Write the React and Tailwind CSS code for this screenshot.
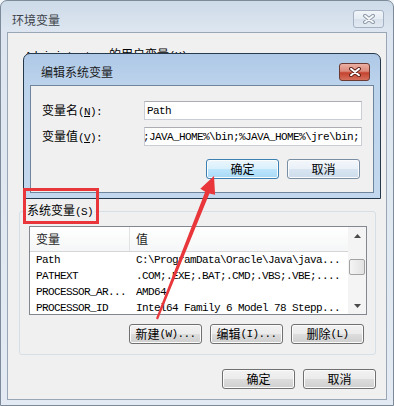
import React from "react";

function Zh({ children, className = "" }) {
  return (
    <span className={`font-['Noto_Sans_CJK_SC',sans-serif] text-[12px] tracking-normal leading-[16px] ${className}`}>
      {children}
    </span>
  );
}

function CloseBtn({ active }) {
  return (
    <div
      className={`w-[31px] h-[18px] rounded-[3px] border flex items-center justify-center ${
        active
          ? "border-[#6b3a33] bg-[linear-gradient(#eab0a3_0%,#dc8a7c_45%,#c4432f_55%,#d5705d_100%)]"
          : "border-[#a3b1c3] bg-[linear-gradient(#f1f5f9_0%,#e5ecf3_50%,#d8e1ec_50%,#e2e9f2_100%)]"
      }`}
    >
      <svg width="12" height="10" viewBox="0 0 12 10">
        <path
          d="M2 1.8 L10 8.2 M10 1.8 L2 8.2"
          stroke={active ? "#5a1d15" : "#8a96a3"}
          strokeWidth="3.8"
          strokeLinecap="round"
        />
        <path
          d="M2 1.8 L10 8.2 M10 1.8 L2 8.2"
          stroke={active ? "#ffffff" : "#f6f8fb"}
          strokeWidth="2"
          strokeLinecap="round"
        />
      </svg>
    </div>
  );
}

// kind: primary (focused, blue), soft (active dialog, bluish), plain
function Btn({ children, kind = "plain" }) {
  const look =
    kind === "primary"
      ? "border-[#3c7fb1] bg-[linear-gradient(#eaf6fd_0%,#d9f0fc_50%,#bee6fd_50%,#a7d9f5_100%)]"
      : kind === "soft"
      ? "border-[#7a8ea3] bg-[linear-gradient(#f3f7fb_0%,#e9f0f7_50%,#d9e5f1_50%,#cddcec_100%)]"
      : "border-[#707070] bg-[linear-gradient(#f2f2f2_0%,#ebebeb_50%,#dddddd_50%,#cfcfcf_100%)]";
  return (
    <div
      className={`h-[20px] w-[73px] rounded-[3px] border flex items-center justify-center shadow-[inset_0_0_0_1px_#fbfbfb] ${look}`}
    >
      {children}
    </div>
  );
}

function Arrow({ down }) {
  return (
    <svg width="7" height="4" viewBox="0 0 7 4">
      <path d={down ? "M0 0 H7 L3.5 4 Z" : "M0 4 H7 L3.5 0 Z"} fill="#4a4a4a" />
    </svg>
  );
}

const rows = [
  ["Path", "C:\\ProgramData\\Oracle\\Java\\java..."],
  ["PATHEXT", ".COM;.EXE;.BAT;.CMD;.VBS;.VBE;...."],
  ["PROCESSOR_AR...", "AMD64"],
  ["PROCESSOR_ID", "Intel64 Family 6 Model 78 Stepp..."],
];

export default function App() {
  return (
    <div className="relative w-[394px] h-[406px] overflow-hidden bg-[#f3f6f9] font-['Liberation_Mono','Noto_Sans_CJK_SC',monospace] text-[11px] tracking-[-0.6px] leading-[16px] text-black">
      {/* outer window: 环境变量 (inactive) */}
      <div className="w-[394px] h-[406px] rounded-t-[7px] border border-[#7c8a9a] px-[6px] pb-[5px] flex flex-col bg-[linear-gradient(180deg,#cddae8_0px,#dde6f0_30px,#e3eaf3_100%)]">
        <div className="h-[31px] flex items-start justify-between shrink-0">
          <Zh className="mt-[11px] ml-[5px] text-[#3d434a]">环境变量</Zh>
          <div className="mt-[9px] mr-[3px]">
            <CloseBtn />
          </div>
        </div>

        <div className="flex-1 border border-[#98a6b6] bg-[#f0f0f0] flex flex-col">
          <div className="mt-[13px] ml-[17px] h-[16px] whitespace-nowrap">
            Administrator <Zh>的用户变量</Zh>(U)
          </div>

          <fieldset className="mt-[140px] ml-[11px] w-[357px] border border-[#d5dfe5] rounded-[3px] pb-[10px]">
            <legend className="ml-[5px] px-[2px] leading-[16px] whitespace-nowrap">
              <Zh>系统变量</Zh>(S)
            </legend>

            <div className="mt-[6px] ml-[9px] w-[338px] h-[89px] border border-[#828790] bg-white flex overflow-hidden">
              <div className="flex-1 min-w-0 flex flex-col">
                <div className="h-[25px] shrink-0 flex border-b border-[#d5d5d5] bg-[linear-gradient(#ffffff,#f5f6f7)]">
                  <div className="w-[100px] border-r border-[#e3e3e3] pl-[6px] flex items-center">
                    <Zh className="text-[#1e1e1e]">变量</Zh>
                  </div>
                  <div className="flex-1 pl-[6px] flex items-center">
                    <Zh className="text-[#1e1e1e]">值</Zh>
                  </div>
                </div>
                {rows.map(([name, value]) => (
                  <div key={name} className="h-[16px] shrink-0 flex whitespace-nowrap">
                    <div className="w-[100px] pl-[6px] overflow-hidden">{name}</div>
                    <div className="flex-1 pl-[6px] overflow-hidden">{value}</div>
                  </div>
                ))}
              </div>
              <div className="w-[18px] shrink-0 bg-[#f4f4f4] flex flex-col items-center">
                <div className="h-[17px] w-full flex items-center justify-center shrink-0">
                  <Arrow />
                </div>
                <div className="mt-[15px] h-[16px] w-[16px] shrink-0 rounded-[2px] border border-[#a2a2a2] bg-[linear-gradient(90deg,#f4f4f4,#e2e2e2)]" />
                <div className="flex-1" />
                <div className="h-[17px] w-full flex items-center justify-center shrink-0">
                  <Arrow down />
                </div>
              </div>
            </div>

            <div className="mt-[9px] pr-[11px] flex justify-end gap-[8px]">
              <Btn>
                <Zh>新建</Zh>(W)...
              </Btn>
              <Btn>
                <Zh>编辑</Zh>(I)...
              </Btn>
              <Btn>
                <Zh>删除</Zh>(L)
              </Btn>
            </div>
          </fieldset>

          <div className="mt-[14px] pr-[10px] flex justify-end gap-[8px]">
            <Btn>
              <Zh>确定</Zh>
            </Btn>
            <Btn>
              <Zh>取消</Zh>
            </Btn>
          </div>
        </div>
      </div>

      {/* inner dialog: 编辑系统变量 (active) */}
      <div className="absolute left-[23px] top-[53px] w-[358px] h-[146px] rounded-t-[7px] border border-[#26384b] px-[6px] pb-[5px] flex flex-col bg-[linear-gradient(180deg,#aec8e6_0px,#bcd3ec_31px,#c3d8ee_100%)]">
        <div className="h-[31px] flex items-start justify-between shrink-0">
          <Zh className="mt-[10px] ml-[11px] text-[#1b1b1b]">编辑系统变量</Zh>
          <div className="mt-[9px] mr-[4px]">
            <CloseBtn active />
          </div>
        </div>
        <div className="flex-1 border border-[#6f859d] bg-[#f0f0f0] flex flex-col">
          <div className="mt-[15px] h-[19px] flex items-center">
            <div className="ml-[11px] w-[102px] whitespace-nowrap">
              <Zh>变量名</Zh>(<span className="underline">N</span>):
            </div>
            <div className="w-[218px] h-[19px] border border-[#c9ced6] border-t-[#abadb3] bg-white pl-[2px] flex items-center">
              Path
            </div>
          </div>
          <div className="mt-[7px] h-[19px] flex items-center">
            <div className="ml-[11px] w-[102px] whitespace-nowrap">
              <Zh>变量值</Zh>(<span className="underline">V</span>):
            </div>
            <div className="w-[218px] h-[19px] border border-[#c9ced6] border-t-[#abadb3] bg-white flex items-center overflow-hidden whitespace-nowrap">
              <span className="ml-[-2px]">{";JAVA_HOME%\\bin;%JAVA_HOME%\\jre\\bin;"}</span>
            </div>
          </div>
          <div className="mt-[13px] pr-[13px] flex justify-end gap-[8px]">
            <Btn kind="primary">
              <Zh>确定</Zh>
            </Btn>
            <Btn kind="soft">
              <Zh>取消</Zh>
            </Btn>
          </div>
        </div>
      </div>

      {/* annotation */}
      <svg className="absolute inset-0 pointer-events-none" width="394" height="406" viewBox="0 0 394 406">
        <rect x="24.5" y="189.5" width="73" height="33" fill="none" stroke="#e8363a" strokeWidth="3" />
        <polygon
          points="214,176 215.1,194.8 209.4,193.6 158,319.4 156,318.6 205.2,191.8 200.3,188.8"
          fill="#e8363a"
        />
      </svg>
    </div>
  );
}
